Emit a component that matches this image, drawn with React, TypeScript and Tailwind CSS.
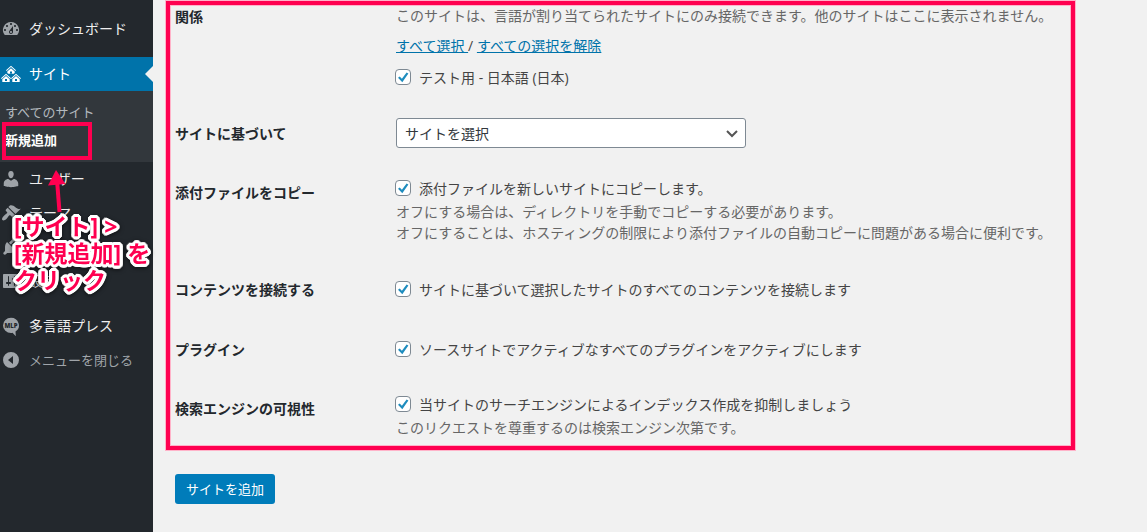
import React, { useState } from 'react';
import type { ReactNode } from 'react';

const MenuIcon = ({ children }: { children: ReactNode }) => (
  <svg viewBox="0 0 20 20" width="20" height="20" className="shrink-0 fill-current" aria-hidden="true">
    {children}
  </svg>
);

const DashboardIcon = () => (
  <MenuIcon>
    <path d="M3.76 16h12.48A7.998 7.998 0 0 0 10 3a7.998 7.998 0 0 0-6.24 13zM10 4c.55 0 1 .45 1 1s-.45 1-1 1-1-.45-1-1 .45-1 1-1zM6 6c.55 0 1 .45 1 1s-.45 1-1 1-1-.45-1-1 .45-1 1-1zm8 0c.55 0 1 .45 1 1s-.45 1-1 1-1-.45-1-1 .45-1 1-1zm-5.37 5.55L12 7v6c0 1.100-.9 2-2 2s-2-.9-2-2c0-.57.24-1.080.63-1.450zM4 10c.55 0 1 .45 1 1s-.45 1-1 1-1-.45-1-1 .45-1 1-1zm12 0c.55 0 1 .45 1 1s-.45 1-1 1-1-.45-1-1 .45-1 1-1zm-5 3c0-.55-.45-1-1-1s-1 .45-1 1 .45 1 1 1 1-.45 1-1z" />
  </MenuIcon>
);

const SitesIcon = () => (
  <MenuIcon>
    <path d="M5 6.200l5-4.400 5 4.400-.7.700L10 3.100 5.700 6.900z" />
    <path d="M6.300 7.400L10 4.200l3.700 3.200V9l-1 .7H7.300l-1-.7zM9 9.400h2V7.500H9z" fillRule="evenodd" />
    <path d="M0 14.200l5-4.400 5 4.400-.7.700L5 11.100.7 14.900z" />
    <path d="M1.300 15.300L5 12.100l3.700 3.200V18H1.300zM4 17h2v-2H4z" fillRule="evenodd" />
    <path d="M10 14.200l5-4.400 5 4.400-.7.700-4.300-3.800-4.300 3.800z" />
    <path d="M11.300 15.300l3.700-3.200 3.700 3.200V18h-7.400zM14 17h2v-2h-2z" fillRule="evenodd" />
  </MenuIcon>
);

const UsersIcon = () => (
  <MenuIcon>
    <path d="M10 9.250c-2.270 0-2.730-3.440-2.730-3.440C7 4.020 7.820 2 9.970 2c2.160 0 2.980 2.020 2.710 3.810 0 0-.41 3.440-2.680 3.440zm0 2.570L12.720 10c2.390 0 4.520 2.330 4.520 4.530v2.490s-3.650 1.130-7.240 1.130c-3.650 0-7.240-1.130-7.240-1.130v-2.490c0-2.250 1.940-4.480 4.470-4.480z" />
  </MenuIcon>
);

const ThemesIcon = () => (
  <MenuIcon>
    <path d="M14.480 11.060L7.410 3.990l1.500-1.500c.5-.56 2.300-.47 3.510.32 1.210.8 1.430 1.280 2.910 2.100 1.180.64 2.450 1.260 4.450.85zm-.71.71L6.700 4.700 4.930 6.470c-.39.39-.39 1.020 0 1.410l1.060 1.060c.39.39.39 1.030 0 1.420-.6.6-1.430 1.110-2.210 1.690-.35.26-.7.53-1.010.84C1.430 14.230.4 16.080 1.400 17.070c.99 1 2.840-.03 4.180-1.360.31-.31.58-.66.85-1.020.57-.78 1.080-1.610 1.690-2.210.39-.39 1.020-.39 1.410 0l1.060 1.060c.39.39 1.020.39 1.410 0z" />
  </MenuIcon>
);

const PluginsIcon = () => (
  <MenuIcon>
    <path d="M13.110 4.360L9.870 7.600 8 5.730l3.240-3.240c.35-.34 1.050-.2 1.560.32.52.51.66 1.210.31 1.550zm-8 1.770l.91-1.120 9.010 9.010-1.190.84c-.71.71-2.630 1.160-3.820 1.160H6.140L4.900 17.260c-.59.59-1.540.59-2.120 0-.59-.58-.59-1.530 0-2.120l1.240-1.240v-3.880c0-1.130.4-3.190 1.090-3.890zm7.260 3.970l3.240-3.240c.34-.35 1.040-.21 1.550.31.52.51.66 1.210.31 1.550l-3.240 3.250z" />
  </MenuIcon>
);

const SettingsIcon = () => (
  <MenuIcon>
    <path d="M18 16V4c0-.55-.45-1-1-1H3c-.55 0-1 .45-1 1v12c0 .55.45 1 1 1h14c.55 0 1-.45 1-1zM8 11h1c.55 0 1 .45 1 1s-.45 1-1 1H8v1.500c0 .28-.22.5-.5.5s-.5-.22-.5-.5V13H6c-.55 0-1-.45-1-1s.45-1 1-1h1V5.500c0-.28.22-.5.5-.5s.5.22.5.5V11zm5-2h-1c-.55 0-1-.45-1-1s.45-1 1-1h1V5.500c0-.28.22-.5.5-.5s.5.22.5.5V7h1c.55 0 1 .45 1 1s-.45 1-1 1h-1v5.500c0 .28-.22.5-.5.5s-.5-.22-.5-.5V9z" />
  </MenuIcon>
);

const PressIcon = () => (
  <MenuIcon>
    <path d="M10 1.800a8 7.600 0 0 0 0 15.200q1 0 1.500-.2l3.300 3.400-.3-4.600A8 7.600 0 0 0 10 1.800z" />
    <text x="10" y="12" textAnchor="middle" className="fill-[#23282d] text-[6px] font-extrabold">
      MLP
    </text>
  </MenuIcon>
);

const CollapseIcon = () => (
  <MenuIcon>
    <path fillRule="evenodd" d="M10 2a8 8 0 1 0 0 16 8 8 0 0 0 0-16zM12 6v8l-5-4z" />
  </MenuIcon>
);

type MenuItemProps = {
  icon: ReactNode;
  label: string;
  active?: boolean;
};

const MenuItem = ({ icon, label, active }: MenuItemProps) => (
  <a
    href="#"
    className={
      active
        ? 'relative flex h-[34px] items-center gap-2 bg-[#0073aa] pl-px text-white'
        : 'flex h-[34px] items-center gap-2 pl-px text-[#9ea3a8]'
    }
  >
    {icon}
    <span className={active ? 'text-white' : 'text-[#eee]'}>{label}</span>
    {active && (
      <span className="absolute right-0 top-[9px] border-y-8 border-r-8 border-y-transparent border-r-[#f1f1f1]" />
    )}
  </a>
);

const Sidebar = () => (
  <nav className="relative w-[153px] shrink-0 bg-[#23282d] pt-3 text-sm whitespace-nowrap">
    <MenuItem icon={<DashboardIcon />} label="ダッシュボード" />
    <div className="mt-[11px]">
      <MenuItem icon={<SitesIcon />} label="サイト" active />
      <ul className="bg-[#32373c] pt-[7px] pb-2 pl-[5px] text-[13px] leading-7">
        <li><a href="#" className="text-[#b4b9be]">すべてのサイト</a></li>
        <li><a href="#" className="font-bold text-white">新規追加</a></li>
      </ul>
    </div>
    <MenuItem icon={<UsersIcon />} label="ユーザー" />
    <MenuItem icon={<ThemesIcon />} label="テーマ" />
    <MenuItem icon={<PluginsIcon />} label="プラグイン" />
    <MenuItem icon={<SettingsIcon />} label="設定" />
    <div className="mt-[11px]">
      <MenuItem icon={<PressIcon />} label="多言語プレス" />
    </div>
    <button type="button" className="flex h-[34px] items-center gap-2 pl-px text-[13px] text-[#a0a5aa]">
      <CollapseIcon />
      メニューを閉じる
    </button>

    {/* highlight, arrow and note drawn over the menu */}
    <div className="pointer-events-none absolute top-[122px] left-[2px] h-[38px] w-[90px] border-4 border-[#ff0050]" />
    <svg className="pointer-events-none absolute top-[170px] left-[48px]" width="20" height="44" viewBox="0 0 20 44" aria-hidden="true">
      <path d="M9 10l2.500 32" stroke="#ff0050" strokeWidth="4" fill="none" />
      <path d="M8 0L0 15.500 17.500 14z" fill="#ff0050" />
    </svg>
    <p className="pointer-events-none absolute top-[213px] left-[14px] text-[23px] leading-[27px] font-bold text-[#ff0050] drop-shadow-[0_1px_2px_rgba(0,0,0,0.6)] [text-shadow:3px_0_white,-3px_0_white,0_3px_white,0_-3px_white,2px_2px_white,-2px_2px_white,2px_-2px_white,-2px_-2px_white,3px_1px_white,-3px_1px_white,3px_-1px_white,-3px_-1px_white,1px_3px_white,-1px_3px_white,1px_-3px_white,-1px_-3px_white,0_0_2px_white]">
      [サイト] &gt;
      <br />
      [新規追加] を
      <br />
      クリック
    </p>
  </nav>
);

const Check = ({ id, label }: { id: string; label: string }) => {
  const [checked, setChecked] = useState(true);

  return (
    <div className="flex h-6 items-center gap-2">
      <span className="relative -ml-px flex size-4">
        <input
          id={id}
          type="checkbox"
          checked={checked}
          onChange={() => setChecked(!checked)}
          className="size-4 appearance-none rounded-[4px] border border-[#7e8993] bg-white"
        />
        {checked && (
          <svg viewBox="0 0 16 16" className="pointer-events-none absolute inset-0 size-4" aria-hidden="true">
            <path d="M3 8.700l1.700-1.300 2.200 2.400 4.700-6.300 1.800 1.100-6.100 8.600z" fill="#1e8cbe" />
          </svg>
        )}
      </span>
      <label htmlFor={id}>{label}</label>
    </div>
  );
};

type FormRowProps = {
  title: string;
  className?: string;
  titleClass?: string;
  children: ReactNode;
};

const FormRow = ({ title, className = '', titleClass = 'pt-[6px]', children }: FormRowProps) => (
  <div className={`flex ${className}`}>
    <div className={`w-[221px] shrink-0 font-semibold text-[#23282d] ${titleClass}`}>{title}</div>
    <div className="min-w-0 grow">{children}</div>
  </div>
);

const SiteForm = () => (
  <main className="min-w-0 grow pb-7 pl-[13px] text-sm leading-[21px] text-[#444]">
    <form onSubmit={(e) => e.preventDefault()}>
      <div className="mt-px mr-[72px] border-4 border-[#ff0050] pb-2 pl-[5px] shadow-[0_0_0_1px_#ffb3c9,inset_0_0_0_1px_#ffb3c9]">
        <FormRow title="関係" titleClass="pt-px">
          <p className="text-[#666]">
            このサイトは、言語が割り当てられたサイトにのみ接続できます。他のサイトはここに表示されません。
          </p>
          <p className="mt-[9px] mb-[9px]">
            <a href="#" className="text-[#0073aa] underline">すべて選択 </a>/{' '}
            <a href="#" className="text-[#0073aa] underline">すべての選択を解除</a>
          </p>
          <Check id="relation" label="テスト用 - 日本語 (日本)" />
        </FormRow>
        <FormRow title="サイトに基づいて" className="mt-[29px]" titleClass="pt-[5px]">
          <div className="relative w-[350px]">
            <select
              aria-label="サイトに基づいて"
              className="h-[30px] w-full appearance-none rounded-[3px] border border-[#7e8993] bg-white px-2 text-[#32373c]"
            >
              <option>サイトを選択</option>
            </select>
            <svg viewBox="0 0 12 8" width="12" height="8" className="pointer-events-none absolute top-[12px] right-2" aria-hidden="true">
              <path d="M1 1l5 5 5-5" fill="none" stroke="#555" strokeWidth="2" />
            </svg>
          </div>
        </FormRow>
        <FormRow title="添付ファイルをコピー" className="mt-[28px]">
          <Check id="attachments" label="添付ファイルを新しいサイトにコピーします。" />
          <p className="mt-px text-[#666]">
            オフにする場合は、ディレクトリを手動でコピーする必要があります。
            <br />
            オフにすることは、ホスティングの制限により添付ファイルの自動コピーに問題がある場合に便利です。
          </p>
        </FormRow>
        <FormRow title="コンテンツを接続する" className="mt-[34px]" titleClass="pt-[2px]">
          <Check id="contents" label="サイトに基づいて選択したサイトのすべてのコンテンツを接続します" />
        </FormRow>
        <FormRow title="プラグイン" className="mt-9" titleClass="pt-[2px]">
          <Check id="plugins" label="ソースサイトでアクティブなすべてのプラグインをアクティブにします" />
        </FormRow>
        <FormRow title="検索エンジンの可視性" className="mt-[31px]">
          <Check id="visibility" label="当サイトのサーチエンジンによるインデックス作成を抑制しましょう" />
          <p className="mt-px text-[#666]">このリクエストを尊重するのは検索エンジン次第です。</p>
        </FormRow>
      </div>
      <button
        type="submit"
        className="mt-6 ml-[9px] h-[30px] rounded-[3px] bg-[#007cba] px-[11px] text-[13px] text-white"
      >
        サイトを追加
      </button>
    </form>
  </main>
);

const App = () => (
  <div className="flex min-h-screen bg-[#f1f1f1] font-['Open_Sans','Noto_Sans_CJK_JP',sans-serif]">
    <Sidebar />
    <SiteForm />
  </div>
);

export default App;
